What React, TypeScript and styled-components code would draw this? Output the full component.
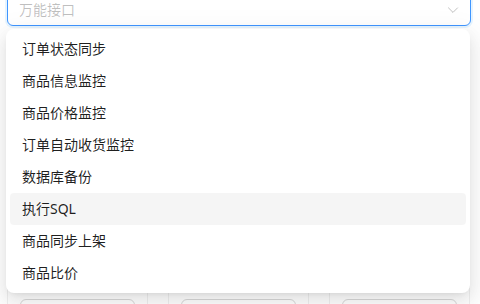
import styled, { createGlobalStyle } from 'styled-components';

const GlobalStyle = createGlobalStyle`
  body {
    margin: 0;
    background: #ffffff;
    font-family: "Noto Sans", "Noto Sans CJK SC", sans-serif;
    font-size: 14px;
    overflow: hidden;
  }
`;

const Page = styled.div`
  position: relative;
  padding: 0 9px 0 7px;
  height: 304px;
  overflow: hidden;
`;

const SelectBox = styled.div`
  margin-top: -6px;
  height: 32px;
  box-sizing: border-box;
  border: 1px solid #4096ff;
  border-radius: 6px;
  box-shadow: 0 0 0 2px rgba(5, 145, 255, 0.1);
  display: flex;
  align-items: center;
  justify-content: space-between;
  padding: 0 11px;
  background: #fff;
`;

const Placeholder = styled.span`
  color: rgba(0, 0, 0, 0.25);
  line-height: 22px;
`;

const Cards = styled.div`
  display: grid;
  grid-template-columns: repeat(3, 1fr);
  gap: 20px;
  margin-top: 14px;
  margin-right: 1px;
`;

const Card = styled.div`
  border: 1px solid #f0f0f0;
  border-radius: 8px;
  padding: 12px;
  display: flex;
  flex-direction: column;
`;

const CardBody = styled.div`
  height: 246px;
`;

const OutlineButton = styled.button`
  height: 32px;
  border: 1px solid #d9d9d9;
  border-radius: 6px;
  background: #fff;
`;

const Dropdown = styled.div`
  position: absolute;
  top: 29px;
  left: 6px;
  width: 464px;
  box-sizing: border-box;
  padding: 4px;
  background: #fff;
  border-radius: 8px;
  box-shadow: 0 6px 16px 0 rgba(0, 0, 0, 0.08), 0 3px 6px -4px rgba(0, 0, 0, 0.12),
    0 9px 28px 8px rgba(0, 0, 0, 0.05);
`;

const Option = styled.div<{ $active?: boolean }>`
  height: 32px;
  box-sizing: border-box;
  padding: 5px 12px;
  line-height: 22px;
  border-radius: 4px;
  color: rgba(0, 0, 0, 0.88);
  background: ${(p) => (p.$active ? 'rgba(0, 0, 0, 0.04)' : 'transparent')};
`;

const options = [
  '订单状态同步',
  '商品信息监控',
  '商品价格监控',
  '订单自动收货监控',
  '数据库备份',
  '执行SQL',
  '商品同步上架',
  '商品比价',
];

const Chevron = () => (
  <svg width="12" height="12" viewBox="0 0 12 12" fill="none">
    <path d="M1.2 3.6 L6 8.4 L10.8 3.6" stroke="rgba(0,0,0,0.25)" strokeWidth="1" />
  </svg>
);

export default function App() {
  return (
    <>
      <GlobalStyle />
      <Page>
        <SelectBox>
          <Placeholder>万能接口</Placeholder>
          <Chevron />
        </SelectBox>
        <Cards>
          {[0, 1, 2].map((i) => (
            <Card key={i}>
              <CardBody />
              <OutlineButton type="button" aria-label="运行" />
            </Card>
          ))}
        </Cards>
        <Dropdown>
          {options.map((o) => (
            <Option key={o} $active={o === '执行SQL'}>
              {o}
            </Option>
          ))}
        </Dropdown>
      </Page>
    </>
  );
}
